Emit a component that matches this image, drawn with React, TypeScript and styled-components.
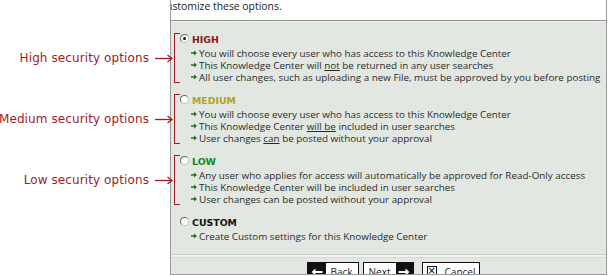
import React from "react";
import styled, { createGlobalStyle } from "styled-components";

type Level = "high" | "medium" | "low" | "custom";

interface SecurityOption {
  level: Level;
  title: string;
  checked?: boolean;
  note?: string;
  lines: React.ReactNode[];
}

const options: SecurityOption[] = [
  {
    level: "high",
    title: "HIGH",
    checked: true,
    note: "High security options",
    lines: [
      "You will choose every user who has access to this Knowledge Center",
      <>
        This Knowledge Center will <u>not</u> be returned in any user searches
      </>,
      "All user changes, such as uploading a new File, must be approved by you before posting",
    ],
  },
  {
    level: "medium",
    title: "MEDIUM",
    note: "Medium security options",
    lines: [
      "You will choose every user who has access to this Knowledge Center",
      <>
        This Knowledge Center <u>will be</u> included in user searches
      </>,
      <>
        User changes <u>can</u> be posted without your approval
      </>,
    ],
  },
  {
    level: "low",
    title: "LOW",
    note: "Low security options",
    lines: [
      "Any user who applies for access will automatically be approved for Read-Only access",
      "This Knowledge Center will be included in user searches",
      "User changes can be posted without your approval",
    ],
  },
  {
    level: "custom",
    title: "CUSTOM",
    lines: ["Create Custom settings for this Knowledge Center"],
  },
];

const titleColors: Record<Level, string> = {
  high: "#921414",
  medium: "#b3a21c",
  low: "#17871a",
  custom: "#111111",
};

const GlobalStyle = createGlobalStyle`
  html, body {
    margin: 0;
    padding: 0;
    background: #ffffff;
  }
  body {
    width: 609px;
    height: 276px;
    overflow: hidden;
    font-family: "Open Sans", "DejaVu Sans", sans-serif;
  }
`;

const Bullet = () => (
  <svg width="6" height="6" viewBox="0 0 6 6">
    <path d="M0 2.2h3V0.5L6 3 3 5.5V3.8H0z" fill="#2c6b25" />
  </svg>
);

const NoteArrow = () => (
  <svg width="18" height="9" viewBox="0 0 18 9">
    <line x1="0" y1="4.5" x2="16.5" y2="4.5" stroke="#a11c25" strokeWidth="1.3" />
    <path d="M12.5 1 L17 4.5 L12.5 8" fill="none" stroke="#a11c25" strokeWidth="1.3" />
  </svg>
);

const LeftArrow = () => (
  <svg width="12" height="8" viewBox="0 0 12 8">
    <path d="M0.5 4 L4.5 0.5 V3 H11.5 V5 H4.5 V7.5z" fill="#ffffff" />
  </svg>
);

const RightArrow = () => (
  <svg width="12" height="8" viewBox="0 0 12 8">
    <path d="M11.5 4 L7.5 0.5 V3 H0.5 V5 H7.5 V7.5z" fill="#ffffff" />
  </svg>
);

export default function App() {
  return (
    <>
      <GlobalStyle />
      <Page>
        <Notes>
          {options
            .filter((o) => o.note)
            .map((o) => (
              <Note key={o.level}>
                <NoteText>{o.note}</NoteText>
                <NoteArrow />
              </Note>
            ))}
        </Notes>
        <Panel>
          <Intro>Customize these options.</Intro>
          <Body>
            {options.map((o) => (
              <OptionGroup key={o.level} $bracket={!!o.note}>
                <OptionTitle>
                  <Radio $checked={!!o.checked} />
                  <TitleText $color={titleColors[o.level]}>{o.title}</TitleText>
                </OptionTitle>
                {o.lines.map((line, i) => (
                  <OptionLine key={i}>
                    <Bullet />
                    <span>{line}</span>
                  </OptionLine>
                ))}
              </OptionGroup>
            ))}
          </Body>
          <Footer>
            <Button>
              <ArrowCell $width={18}>
                <LeftArrow />
              </ArrowCell>
              <ButtonLabel>Back</ButtonLabel>
            </Button>
            <Button>
              <ButtonLabel>Next</ButtonLabel>
              <ArrowCell $width={17}>
                <RightArrow />
              </ArrowCell>
            </Button>
            <Button $gap>
              <CancelBox>×</CancelBox>
              <ButtonLabel $compact>Cancel</ButtonLabel>
            </Button>
          </Footer>
        </Panel>
      </Page>
    </>
  );
}

const Page = styled.div`
  display: flex;
  width: 609px;
  height: 276px;
`;

const Notes = styled.div`
  width: 170px;
  flex-shrink: 0;
  display: flex;
  flex-direction: column;
  align-items: flex-end;
  gap: 41px;
  padding-top: 48px;
  box-sizing: border-box;
  position: relative;
  z-index: 1;
`;

const Note = styled.div`
  display: flex;
  align-items: center;
  gap: 6px;
  height: 20px;
  margin-right: -3px;
  white-space: nowrap;
`;

const NoteText = styled.span`
  font-family: "DejaVu Sans", sans-serif;
  font-size: 12px;
  color: #a11c25;
  letter-spacing: 0.1px;
`;

const Panel = styled.div`
  width: 437px;
  height: 275px;
  flex-shrink: 0;
  box-sizing: border-box;
  border: 1px solid #9a9a9a;
  border-top: none;
  display: flex;
  flex-direction: column;
  overflow: hidden;
  background: #e2e8e1;
`;

const Intro = styled.div`
  height: 20px;
  flex-shrink: 0;
  background: #ffffff;
  border-bottom: 1px solid #8e8e8e;
  box-shadow: 0 1px 0 #f2f5f1;
  font-size: 10.4px;
  line-height: 12px;
  color: #222;
  text-indent: -11.5px;
  white-space: nowrap;
  overflow: hidden;
`;

const Body = styled.div`
  display: flex;
  flex-direction: column;
  gap: 11px;
  padding: 12px 0 0 3px;
  height: 233px;
  flex-shrink: 0;
  box-sizing: border-box;
`;

const OptionGroup = styled.div<{ $bracket: boolean }>`
  position: relative;
  padding-left: 6px;
  &::before {
    content: "";
    display: ${(p) => (p.$bracket ? "block" : "none")};
    position: absolute;
    left: 0;
    top: 0;
    bottom: 0;
    width: 5px;
    border: 1.5px solid #a11c25;
    border-right: none;
  }
`;

const OptionTitle = styled.div`
  display: flex;
  align-items: center;
  gap: 3px;
  height: 14px;
`;

const Radio = styled.span<{ $checked: boolean }>`
  width: 9px;
  height: 9px;
  border-radius: 50%;
  box-sizing: border-box;
  background: #ffffff;
  border: 1px solid #666;
  border-right-color: #c4c4c4;
  border-bottom-color: #c4c4c4;
  display: flex;
  align-items: center;
  justify-content: center;
  margin-top: -3px;
  &::after {
    content: "";
    display: ${(p) => (p.$checked ? "block" : "none")};
    width: 3px;
    height: 3px;
    border-radius: 50%;
    background: #111;
  }
`;

const TitleText = styled.span<{ $color: string }>`
  font-family: "DejaVu Sans", sans-serif;
  font-weight: bold;
  font-size: 9.4px;
  line-height: 14px;
  color: ${(p) => p.$color};
`;

const OptionLine = styled.div`
  display: flex;
  align-items: center;
  gap: 2px;
  height: 12px;
  padding-left: 11px;
  font-size: 9.85px;
  line-height: 12px;
  color: #2b2b2b;
  white-space: nowrap;
`;

const Footer = styled.div`
  border-top: 1px solid #c9ccc6;
  box-shadow: inset 0 2px 0 #f1f3ef, inset 0 3px 0 #d6d9d3;
  flex: 1;
  display: flex;
  justify-content: center;
  align-items: flex-start;
  gap: 4px;
  padding: 7px 0 0 10px;
`;

const Button = styled.div<{ $gap?: boolean }>`
  display: flex;
  flex-shrink: 0;
  height: 18px;
  border: 1px solid #111;
  background: #ffffff;
  margin-left: ${(p) => (p.$gap ? "4px" : "0")};
`;

const ArrowCell = styled.span<{ $width: number }>`
  width: ${(p) => p.$width}px;
  background: #111;
  display: flex;
  align-items: center;
  justify-content: center;
`;

const CancelBox = styled.span`
  width: 10px;
  height: 10px;
  margin: 3px 5px 3px 4px;
  box-sizing: border-box;
  border: 1px solid #111;
  font-size: 10px;
  line-height: 8px;
  text-align: center;
  font-family: "DejaVu Sans", sans-serif;
`;

const ButtonLabel = styled.span<{ $compact?: boolean }>`
  padding: ${(p) => (p.$compact ? "0 4px 0 3px" : "0 5px")};
  font-size: 10px;
  line-height: 18px;
  color: #222;
`;
